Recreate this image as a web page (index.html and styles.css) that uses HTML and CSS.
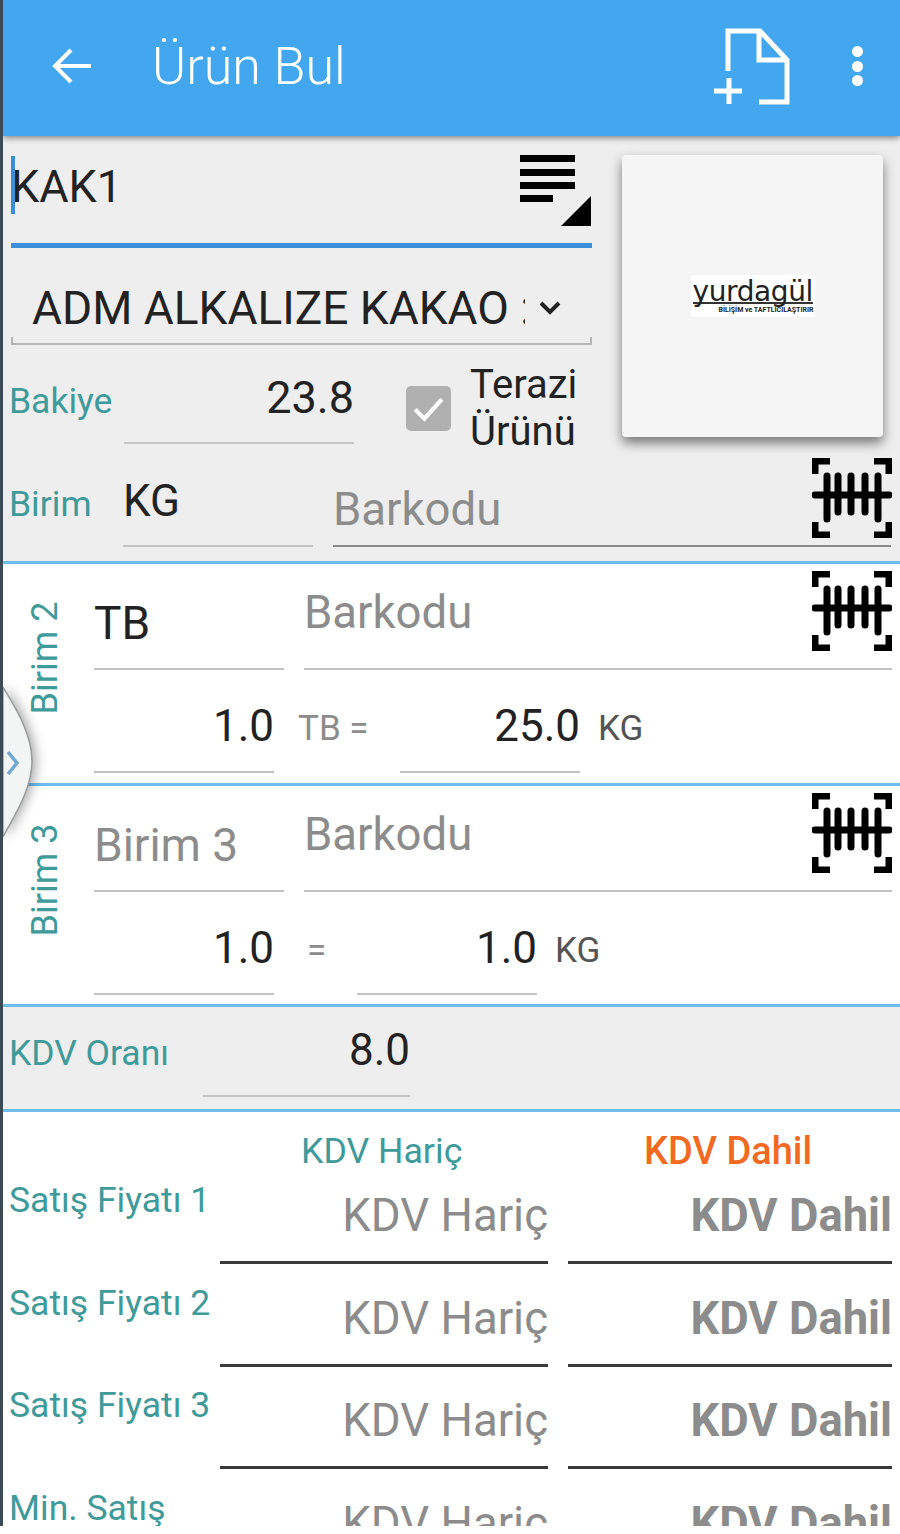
FILE: index.html
```html
<!DOCTYPE html>
<html lang="tr">
<head>
    <meta charset="UTF-8">
    <meta name="viewport" content="width=device-width, initial-scale=1.0">
    <title>Ürün Bul</title>
    <link rel="stylesheet" href="styles.css">
</head>
<body>
    <div class="screen">
        <header class="toolbar">
            <svg class="back-icon" viewBox="0 0 40 36" fill="none" stroke="#fff" stroke-width="4"><path d="M39 18H4M19 2 3 18l16 16"/></svg>
            <div class="toolbar-title">Ürün Bul</div>
            <svg class="new-icon" viewBox="0 0 78 78" fill="none" stroke="#fff" stroke-width="5"><path d="M15 44V4h32l27 29v42H46M46 4v29h28M16 51v26M1 64h28"/></svg>
            <div class="menu-dots"><span></span><span></span><span></span></div>
        </header>

        <section class="top">
            <div class="top-left">
                <div class="search-row">
                    <span class="caret"></span>
                    <span class="search-text">KAK1</span>
                    <svg class="list-icon" viewBox="0 0 72 72"><path d="M0 0h55v7H0zM0 14h55v7H0zM0 27h55v7H0zM0 40h33v7H0zM71 41v30H41z" fill="#000"/></svg>
                </div>
                <div class="product-row">
                    <span class="product-name">ADM ALKALIZE KAKAO :</span>
                    <svg class="chevron" viewBox="0 0 24 14" fill="none" stroke="#222" stroke-width="4"><path d="M3 2l9 9 9-9"/></svg>
                </div>
                <div class="stock-row">
                    <span class="label stock-label">Bakiye</span>
                    <span class="stock-value">23.8</span>
                    <span class="check-box"><svg viewBox="0 0 44 44" fill="none" stroke="#fff" stroke-width="4"><path d="M9 23l9 9 17-19"/></svg></span>
                    <span class="scale-text">Terazi<br>Ürünü</span>
                </div>
            </div>
            <div class="photo-card">
                <div class="logo">
                    <div class="logo-word">yurdagül</div>
                    <div class="logo-sub">BİLİŞİM ve TAFTLICILAŞTIRIR</div>
                </div>
            </div>
        </section>

        <div class="unit-row">
            <span class="label unit-label">Birim</span>
            <span class="unit-value">KG</span>
            <span class="barcode-field">Barkodu</span>
            <svg class="scan-icon" viewBox="0 0 80 80"><use href="#scan"/></svg>
        </div>

        <section class="unit-box">
            <div class="unit-block">
                <div class="side-label"><span>Birim 2</span></div>
                <div class="unit-fields">
                    <div class="fields-top">
                        <span class="unit-name">TB</span>
                        <span class="unit-barcode">Barkodu</span>
                        <svg class="scan-icon" viewBox="0 0 80 80"><use href="#scan"/></svg>
                    </div>
                    <div class="fields-bottom">
                        <span class="qty">1.0</span>
                        <span class="eq eq-tb">TB =</span>
                        <span class="qty qty-result">25.0</span>
                        <span class="eq-unit">KG</span>
                    </div>
                </div>
            </div>
            <div class="unit-block">
                <div class="side-label"><span>Birim 3</span></div>
                <div class="unit-fields">
                    <div class="fields-top">
                        <span class="unit-name empty">Birim 3</span>
                        <span class="unit-barcode">Barkodu</span>
                        <svg class="scan-icon" viewBox="0 0 80 80"><use href="#scan"/></svg>
                    </div>
                    <div class="fields-bottom">
                        <span class="qty">1.0</span>
                        <span class="eq eq-plain">=</span>
                        <span class="qty qty-result">1.0</span>
                        <span class="eq-unit">KG</span>
                    </div>
                </div>
            </div>
            <div class="drawer-tab">
                <svg class="drawer-shape" viewBox="0 0 36 150"><path d="M0 0C8 14 29 44 29 74S8 134 0 150Z" fill="#f3f5f5" stroke="#9a9a9a" stroke-width="1.5"/></svg>
                <svg class="drawer-arrow" viewBox="0 0 14 26" fill="none" stroke="#6fa8d2" stroke-width="3.5"><path d="M2 2l9 11L2 24"/></svg>
            </div>
        </section>

        <div class="vat-row">
            <span class="label">KDV Oranı</span>
            <span class="vat-value">8.0</span>
        </div>

        <section class="prices">
            <div class="price-head">
                <span class="head-ex">KDV Hariç</span>
                <span class="head-in">KDV Dahil</span>
            </div>
            <div class="price-row">
                <span class="label">Satış Fiyatı 1</span>
                <span class="price-ex">KDV Hariç</span>
                <span class="price-in">KDV Dahil</span>
            </div>
            <div class="price-row">
                <span class="label">Satış Fiyatı 2</span>
                <span class="price-ex">KDV Hariç</span>
                <span class="price-in">KDV Dahil</span>
            </div>
            <div class="price-row">
                <span class="label">Satış Fiyatı 3</span>
                <span class="price-ex">KDV Hariç</span>
                <span class="price-in">KDV Dahil</span>
            </div>
            <div class="price-row">
                <span class="label">Min. Satış</span>
                <span class="price-ex">KDV Hariç</span>
                <span class="price-in">KDV Dahil</span>
            </div>
        </section>
    </div>

    <!-- barkod ikonu -->
    <svg width="0" height="0" class="defs">
        <defs>
            <g id="scan" fill="none" stroke="#000" stroke-width="7" stroke-linecap="round">
                <path d="M18 3H3v13M62 3h15v13M18 77H3V64M62 77h15V64" stroke-linecap="butt"/>
                <path d="M3 37h74M15 18v43M26 18v36M39 18v36M53 18v36M66 18v43"/>
            </g>
        </defs>
    </svg>
</body>
</html>
```
FILE: styles.css
```css
html, body {
    margin: 0;
    padding: 0;
    background: #fff;
}
.defs {
    position: absolute;
}
.screen {
    width: 900px;
    height: 1526px;
    overflow: hidden;
    background: #eeeeee;
    border-left: 3px solid #3b4a55;
    box-sizing: border-box;
    font-family: Roboto, "Noto Sans", sans-serif;
    color: #222;
}
.toolbar {
    height: 136px;
    padding-bottom: 4px;
    box-sizing: border-box;
    background: #42a7ee;
    display: flex;
    align-items: center;
    box-shadow: 0 2px 6px rgba(0, 0, 0, 0.45);
    position: relative;
}
.back-icon {
    width: 40px;
    height: 36px;
    margin-left: 49px;
}
.toolbar-title {
    color: #fff;
    font-size: 52px;
    font-weight: 300;
    margin-left: 60px;
    flex: 1;
}
.new-icon {
    width: 78px;
    height: 78px;
    margin-right: 61px;
}
.menu-dots {
    display: flex;
    flex-direction: column;
    gap: 3.5px;
    margin-right: 37px;
}
.menu-dots span {
    width: 11px;
    height: 11px;
    border-radius: 50%;
    background: #fff;
}
.label {
    color: #3f9a9a;
    font-size: 35.5px;
}
.top {
    display: flex;
    height: 310px;
}
.top-left {
    width: 589px;
    padding-left: 8px;
    box-sizing: border-box;
}
.search-row {
    height: 112px;
    border-bottom: 5px solid #3a8fd8;
    display: flex;
    position: relative;
    box-sizing: border-box;
}
.caret {
    position: absolute;
    left: 0;
    top: 20px;
    width: 4px;
    height: 58px;
    background: #3a8fd8;
}
.search-text {
    font-size: 45px;
    padding-top: 24px;
    flex: 1;
}
.list-icon {
    width: 72px;
    height: 72px;
    margin-top: 19px;
}
.product-row {
    height: 97px;
    display: flex;
    align-items: flex-end;
    border-bottom: 2px solid #b5b5b5;
    box-sizing: border-box;
    padding: 0 30px 8px 21px;
    justify-content: space-between;
    position: relative;
}
.product-row::after {
    content: "";
    position: absolute;
    left: 0;
    right: 0;
    bottom: 0;
    height: 6px;
    box-sizing: border-box;
    border-left: 2px solid #b5b5b5;
    border-right: 2px solid #b5b5b5;
}
.product-name {
    font-size: 46px;
    white-space: nowrap;
    width: 493px;
    overflow: hidden;
}
.chevron {
    width: 24px;
    height: 14px;
    margin-bottom: 20px;
}
.stock-row {
    display: flex;
    align-items: center;
    height: 100px;
    position: relative;
}
.stock-label {
    width: 115px;
    margin-left: -2px;
    margin-top: 12px;
    flex: none;
}
.stock-value {
    width: 230px;
    flex: none;
    font-size: 45px;
    text-align: right;
    box-sizing: border-box;
    height: 98px;
    line-height: 104px;
    border-bottom: 2px solid #c4c4c4;
}
.check-box {
    width: 45px;
    height: 45px;
    background: #b0b0b0;
    border-radius: 5px;
    margin: 26px 0 0 52px;
    flex: none;
}
.check-box svg {
    display: block;
}
.scale-text {
    font-size: 40px;
    line-height: 47px;
    margin: 26px 0 0 19px;
}
.photo-card {
    width: 261px;
    height: 282px;
    margin: 19px 0 0 30px;
    background: #f5f5f5;
    border-radius: 4px;
    box-shadow: 0 6px 12px rgba(0, 0, 0, 0.5);
    display: flex;
    align-items: center;
    justify-content: center;
}
.logo {
    background: #fff;
    width: 124px;
    height: 42px;
    text-align: center;
    color: #222;
}
.logo-word {
    font-family: "DejaVu Sans", sans-serif;
    font-size: 28px;
    line-height: 34px;
    letter-spacing: -0.4px;
    border-bottom: 2px solid #333;
    height: 27px;
    margin: 0 2px;
}
.logo-sub {
    font-size: 7px;
    font-weight: 700;
    line-height: 13px;
    white-space: nowrap;
    text-align: right;
    padding-right: 1px;
}
.unit-row {
    display: flex;
    height: 115px;
    align-items: flex-end;
    padding: 0 0 14px 6px;
    box-sizing: border-box;
    position: relative;
}
.unit-row .unit-label {
    width: 114px;
    padding-bottom: 22px;
}
.unit-value {
    width: 190px;
    height: 100px;
    line-height: 108px;
    font-size: 44px;
    border-bottom: 2px solid #c4c4c4;
    box-sizing: border-box;
}
.barcode-field {
    margin-left: 20px;
    width: 558px;
    font-size: 45.5px;
    color: #8c8c8c;
    border-bottom: 2px solid #888;
    height: 70px;
    padding-top: 6px;
    box-sizing: border-box;
}
.scan-icon {
    width: 80px;
    height: 80px;
}
.unit-row .scan-icon {
    position: absolute;
    right: 8px;
    top: 12px;
}
.unit-box {
    background: #fff;
    border-top: 3px solid #6fbdf0;
    border-bottom: 3px solid #6fbdf0;
    border-left: 3px solid #3a8fd8;
    margin-left: -3px;
    position: relative;
}
.unit-block {
    display: flex;
    height: 219px;
}
.unit-block + .unit-block {
    height: 218px;
    border-top: 3px solid #6fbdf0;
}
.side-label {
    width: 91px;
    flex: none;
    position: relative;
}
.side-label span {
    position: absolute;
    left: 42px;
    top: 94px;
    color: #3f9a9a;
    font-size: 36px;
    white-space: nowrap;
    transform: translate(-50%, -50%) rotate(-90deg);
}
.unit-fields {
    flex: 1;
    min-width: 0;
}
.fields-top {
    display: flex;
    height: 106px;
    position: relative;
}
.unit-name {
    width: 190px;
    font-size: 46px;
    border-bottom: 2px solid #c4c4c4;
    line-height: 118px;
    box-sizing: border-box;
}
.unit-name.empty {
    color: #8c8c8c;
}
.unit-barcode {
    margin-left: 20px;
    width: 588px;
    font-size: 45.5px;
    color: #8c8c8c;
    border-bottom: 2px solid #c4c4c4;
    line-height: 98px;
    box-sizing: border-box;
}
.fields-top .scan-icon {
    position: absolute;
    right: 8px;
    top: 7px;
}
.fields-bottom {
    display: flex;
    align-items: flex-start;
    height: 103px;
}
.qty {
    width: 180px;
    flex: none;
    font-size: 44px;
    text-align: right;
    height: 103px;
    line-height: 112px;
    border-bottom: 2px solid #c4c4c4;
    box-sizing: border-box;
}
.eq {
    font-size: 35px;
    color: #8c8c8c;
    line-height: 118px;
    flex: none;
}
.eq-tb {
    width: 126px;
    padding-left: 24px;
    box-sizing: border-box;
}
.eq-plain {
    width: 83px;
    padding-left: 33px;
    box-sizing: border-box;
}
.eq-unit {
    font-size: 35px;
    color: #555;
    line-height: 118px;
    margin-left: 18px;
}
.drawer-tab {
    position: absolute;
    left: -3px;
    top: 123px;
    height: 150px;
    border-left: 3px solid #666;
}
.drawer-shape {
    width: 36px;
    height: 150px;
    display: block;
    filter: drop-shadow(3px 0 6px rgba(0, 0, 0, 0.35));
}
.drawer-arrow {
    position: absolute;
    left: 3px;
    top: 63px;
    width: 14px;
    height: 26px;
}
.vat-row {
    height: 102px;
    display: flex;
    padding-left: 6px;
    position: relative;
}
.vat-row .label {
    width: 194px;
    line-height: 92px;
}
.vat-value {
    width: 207px;
    text-align: right;
    font-size: 44px;
    height: 90px;
    line-height: 86px;
    border-bottom: 2px solid #c4c4c4;
    box-sizing: border-box;
}
.prices {
    background: #fff;
    border-top: 3px solid #6fbdf0;
    border-left: 3px solid #3a8fd8;
    margin-left: -3px;
    padding-left: 6px;
}
.price-head {
    display: flex;
    height: 71px;
    line-height: 78px;
}
.head-ex {
    color: #3f9a9a;
    font-size: 35.7px;
    margin-left: 292px;
    width: 343px;
}
.head-in {
    color: #f26a21;
    font-size: 38px;
    font-weight: 500;
}
.price-row {
    display: grid;
    grid-template-columns: 211px 328px 344px;
    height: 102.7px;
    position: relative;
}
.price-row .label {
    line-height: 50px;
    margin-top: -8px;
    white-space: nowrap;
}
.price-ex, .price-in {
    font-size: 45.5px;
    color: #8c8c8c;
    text-align: right;
    height: 81px;
    line-height: 66px;
    border-bottom: 3px solid #3a3a3a;
    box-sizing: border-box;
}
.price-in {
    font-size: 45.3px;
    font-weight: 700;
    margin-left: 20px;
}
```
